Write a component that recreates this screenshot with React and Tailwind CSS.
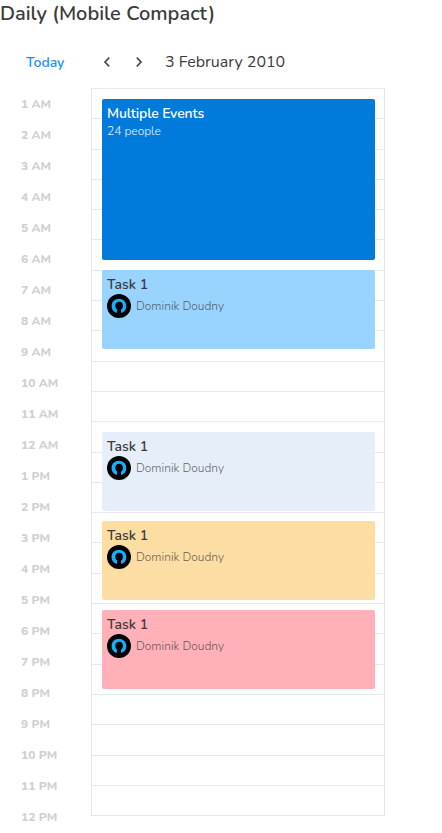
import React from "react";

const hours = [
  "1 AM", "2 AM", "3 AM", "4 AM", "5 AM", "6 AM", "7 AM", "8 AM", "9 AM", "10 AM", "11 AM", "12 AM",
  "1 PM", "2 PM", "3 PM", "4 PM", "5 PM", "6 PM", "7 PM", "8 PM", "9 PM", "10 PM", "11 PM", "12 PM",
];

const tasks = [
  { color: "bg-[#99d3ff]", gap: "mt-[9.5px]", height: "h-[79.5px]" },
  { color: "bg-[#e6eff9]", gap: "mt-[83px]", height: "h-[79px]" },
  { color: "bg-[#fcdda4]", gap: "mt-[10px]", height: "h-[79px]" },
  { color: "bg-[#ffb0b9]", gap: "mt-[10px]", height: "h-[79px]" },
];

function Avatar() {
  return (
    <svg className="size-6 shrink-0" viewBox="0 0 24 24">
      <circle cx="12" cy="12" r="12" fill="#000" />
      <path
        d="M9.600 18.900C6.600 18.300 4.600 15.500 4.600 12C4.600 7.800 7.800 4.800 11.900 4.800S19.300 7.800 19.300 12C19.300 15.500 17.400 18.300 14.100 18.900L13.900 15.700C15.400 14.900 15.900 13.300 15.900 11.500C15.900 9.300 14.300 7.700 12.100 7.700S8.300 9.300 8.300 11.500C8.300 13.300 8.900 14.800 10.300 15.700Z"
        fill="#14b0ff"
      />
    </svg>
  );
}

function Chevron({ d }) {
  return (
    <svg className="h-3 w-2" viewBox="0 0 8 12" fill="none" stroke="#4b4b4b" strokeWidth="1.7">
      <path d={d} />
    </svg>
  );
}

function Task({ color, gap, height }) {
  return (
    <div className={`${color} ${gap} ${height} shrink-0 rounded-[2px] px-[5px] pt-[5px]`}>
      <div className="h-[19px] text-[14px] leading-[19px] font-semibold text-[#3b3b3b]">Task 1</div>
      <div className="flex h-6 items-center gap-[5px]">
        <Avatar />
        <span className="text-[12px] leading-4 font-light whitespace-nowrap text-[#3b3b3b]/80">Dominik Doudny</span>
      </div>
    </div>
  );
}

export default function App() {
  return (
    <div className="h-[833px] w-[442px] overflow-hidden bg-white font-['Nunito','Lato',sans-serif] text-[#3b3b3b]">
      <h1 className="h-[27px] text-[20px] leading-[27px] font-semibold whitespace-nowrap">Daily (Mobile Compact)</h1>
      <div className="flex h-[61px] items-center pt-[9px] pl-[26px]">
        <span className="w-[77px] text-[14px] font-semibold text-[#1492ff]">Today</span>
        <Chevron d="M6.2 1.7 2 6l4.2 4.3" />
        <span className="w-6" />
        <Chevron d="M1.8 1.7 6 6l-4.2 4.3" />
        <span className="ml-[22px] text-[16px] whitespace-nowrap">3 February 2010</span>
      </div>
      <div className="flex">
        <div className="w-[91px] pl-[21px]">
          {hours.map((hour) => (
            <div key={hour} className="h-[31px] text-[12px] leading-8 font-extrabold text-[#d0d0d0]">{hour}</div>
          ))}
        </div>
        <div className="relative flex h-[728px] w-[294px] flex-col border border-[#e5e6eb]">
          <div className="-mt-px flex flex-1 flex-col">
            {hours.map((hour) => (
              <div key={hour} className="min-h-0 flex-1 border-t border-[#e8e9ee]" />
            ))}
          </div>
          <div className="absolute inset-x-0 top-0 flex flex-col pt-[9.5px] pr-[9px] pl-[10px]">
            <div className="h-[161.5px] shrink-0 rounded-[2px] bg-[#007bdb] px-[5px] pt-[5px] text-white">
              <div className="h-[19px] text-[14px] leading-[19px] font-semibold tracking-[-0.15px]">Multiple Events</div>
              <div className="text-[12px] leading-4 font-light text-white/90">24 people</div>
            </div>
            {tasks.map((task) => (
              <Task key={task.color} {...task} />
            ))}
          </div>
        </div>
      </div>
    </div>
  );
}
